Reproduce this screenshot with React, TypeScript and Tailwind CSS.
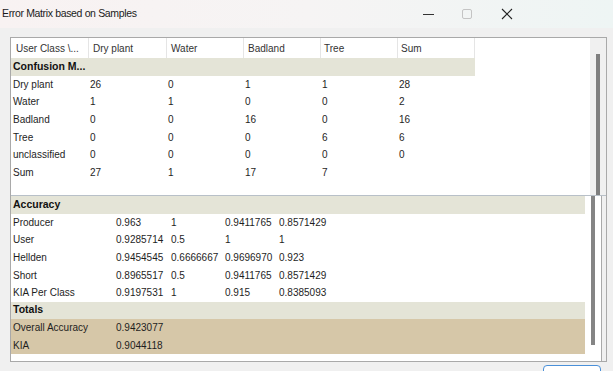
const font = { fontFamily: '"Liberation Sans", Arial, sans-serif' };

const topHead = [
  { label: "User Class \\...", w: "w-[78px]", pl: "pl-[5px]" },
  { label: "Dry plant", w: "w-[78px]", pl: "pl-[4px]" },
  { label: "Water", w: "w-[77px]", pl: "pl-[4px]" },
  { label: "Badland", w: "w-[77px]", pl: "pl-[4px]" },
  { label: "Tree", w: "w-[77px]", pl: "pl-[3px]" },
  { label: "Sum", w: "w-[77px]", pl: "pl-[3px]" },
];

const confusion: string[][] = [
  ["Dry plant", "26", "0", "1", "1", "28"],
  ["Water", "1", "1", "0", "0", "2"],
  ["Badland", "0", "0", "16", "0", "16"],
  ["Tree", "0", "0", "0", "6", "6"],
  ["unclassified", "0", "0", "0", "0", "0"],
  ["Sum", "27", "1", "17", "7", ""],
];

const accuracy: string[][] = [
  ["Producer", "0.963", "1", "0.9411765", "0.8571429"],
  ["User", "0.9285714", "0.5", "1", "1"],
  ["Hellden", "0.9454545", "0.6666667", "0.9696970", "0.923"],
  ["Short", "0.8965517", "0.5", "0.9411765", "0.8571429"],
  ["KIA Per Class", "0.9197531", "1", "0.915", "0.8385093"],
];

const totals: string[][] = [
  ["Overall Accuracy", "0.9423077"],
  ["KIA", "0.9044118"],
];

const lowCols = ["w-[105px] pl-[2px]", "w-[55px]", "w-[54px]", "w-[54px]", "w-[60px]"];

function TitleBar() {
  return (
    <div className="h-[28px] flex items-center bg-gradient-to-r from-[#f8f2f2] via-[#f6f4f4] to-[#eef5f4]">
      <span className="pl-[2px] text-[10.5px] tracking-[-0.35px] text-[#1b1b1b]">
        Error Matrix based on Samples
      </span>
      <div className="ml-auto flex items-center h-full">
        <svg width="12" height="12" viewBox="0 0 12 12" className="mr-[26px]">
          <line x1="0" y1="6.5" x2="11" y2="6.5" stroke="#333" strokeWidth="1" />
        </svg>
        <svg width="12" height="12" viewBox="0 0 12 12" className="mr-[28px]">
          <rect x="1.5" y="1.5" width="9" height="9" rx="1.5" fill="none" stroke="#c4c4c4" strokeWidth="1" />
        </svg>
        <svg width="12" height="12" viewBox="0 0 12 12" className="mr-[100px]">
          <path d="M1 1 L11 11 M11 1 L1 11" stroke="#222" strokeWidth="1.1" />
        </svg>
      </div>
    </div>
  );
}

export default function App() {
  return (
    <div className="w-[613px] h-[371px] overflow-hidden bg-[#f0f0f0] text-[#1e1e1e]" style={font}>
      <TitleBar />
      <div className="ml-[10px] mt-[9px] w-[597px] border border-[#a9a9a9] bg-white">
        {/* confusion matrix list */}
        <div className="h-[158px] flex border-b border-[#b8c0c8]">
          <div className="flex-1 text-[10px]">
            <div className="flex h-[20px] items-center">
              {topHead.map((h) => (
                <div key={h.label} className={`${h.w} ${h.pl} h-full flex items-center border-r border-[#e5e5e5] text-[#333]`}>
                  {h.label}
                </div>
              ))}
            </div>
            <div className="w-[464px] h-[17.6px] flex items-center bg-[#e4e4d7] pl-[2px] font-bold text-[10.5px] text-[#111]">
              Confusion M...
            </div>
            {confusion.map((row) => (
              <div key={row[0]} className="flex h-[17.6px] items-center">
                {row.map((c, i) => (
                  <div key={i} className={`${topHead[i].w} ${i === 0 ? "pl-[2px]" : "pl-[1px]"}`}>
                    {c}
                  </div>
                ))}
              </div>
            ))}
          </div>
          <div className="w-[16px] bg-[#f0f0f0] flex">
            <div className="ml-[6px] mt-[16px] w-[4px] bg-[#7f7f7f]" />
          </div>
        </div>

        {/* accuracy + totals */}
        <div className="h-[165px] flex">
          <div className="flex-1 pr-[3px] text-[10px]">
            <div className="h-[17.6px] flex items-center bg-[#e4e4d7] pl-[2px] font-bold text-[10.5px] text-[#111]">
              Accuracy
            </div>
            {accuracy.map((row) => (
              <div key={row[0]} className="flex h-[17.6px] items-center">
                {row.map((c, i) => (
                  <div key={i} className={lowCols[i]}>
                    {c}
                  </div>
                ))}
              </div>
            ))}
            <div className="h-[17.6px] flex items-center bg-[#e4e4d7] pl-[2px] font-bold text-[10.5px] text-[#111]">
              Totals
            </div>
            {totals.map((row) => (
              <div key={row[0]} className="flex h-[17.6px] items-center bg-[#d6c7a8]">
                {row.map((c, i) => (
                  <div key={i} className={lowCols[i]}>
                    {c}
                  </div>
                ))}
              </div>
            ))}
          </div>
          <div className="w-[13px] bg-white flex">
            <div className="ml-[3px] w-[4px] h-[149px] bg-[#858585]" />
          </div>
          <div className="w-[5px] border-l border-[#a9a9a9] bg-[#f0f0f0]" />
        </div>
      </div>
      <div className="flex justify-end pr-[12px] mt-[3px]">
        <div className="w-[58px] h-[20px] rounded-[4px] border border-[#4a90d9] bg-white" />
      </div>
    </div>
  );
}
